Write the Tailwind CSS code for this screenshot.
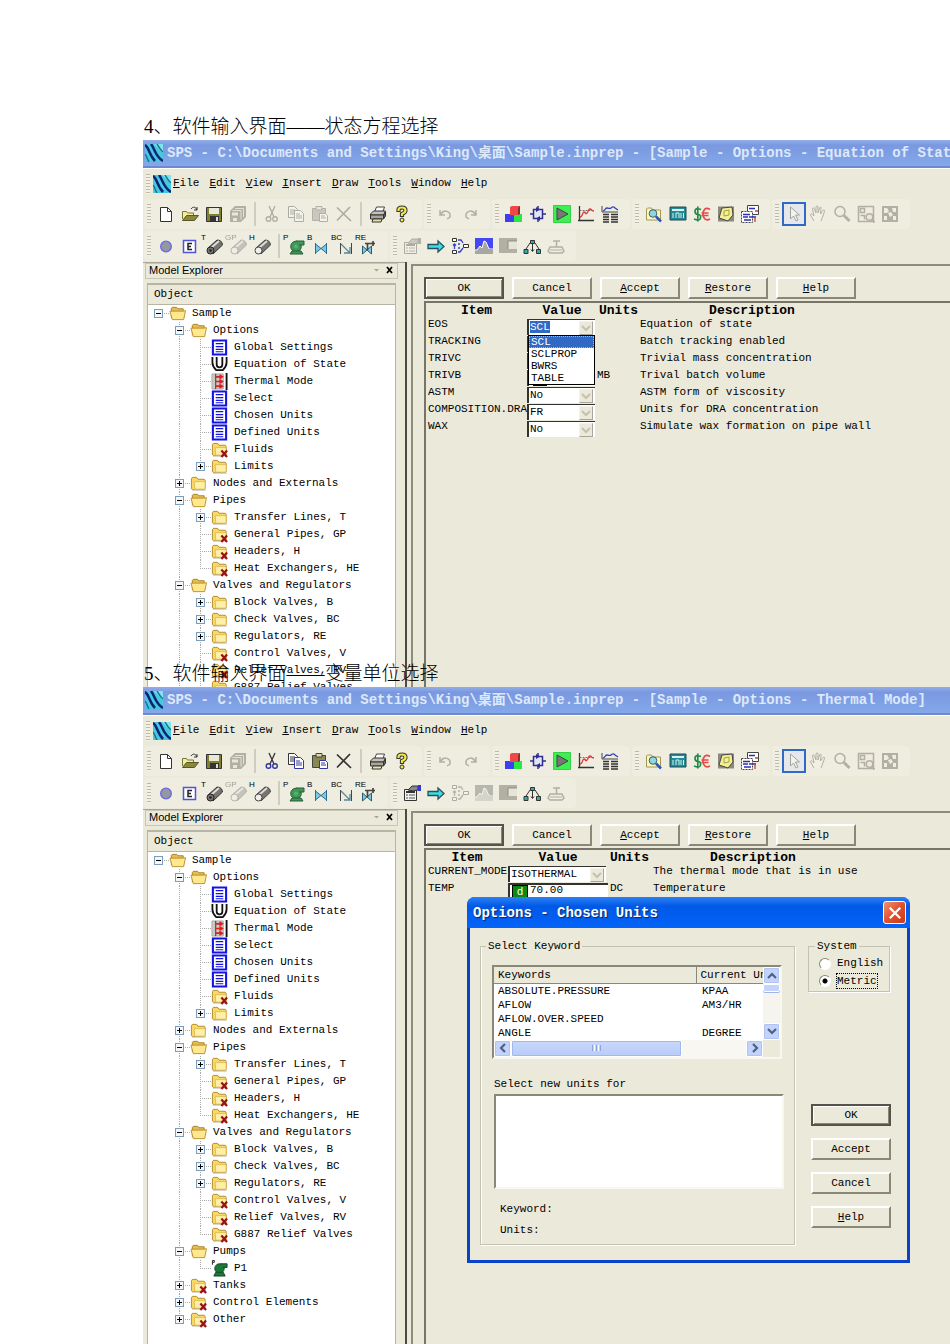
<!DOCTYPE html>
<html lang="zh-CN">
  <head>
    <meta charset="UTF-8" />
    <meta name="viewport" content="width=device-width, initial-scale=1.0" />
    <title>SPS 软件输入界面</title>
    <script src="https://cdn.jsdelivr.net/npm/@tailwindcss/browser@4"></script>
  </head>
  <body class="bg-white min-h-screen flex flex-col pt-28 overflow-x-hidden text-[11px] text-black font-['Liberation_Mono','Noto_Sans_CJK_SC',monospace]">
    <h2 class="ml-36 h-7 text-[19px] leading-[30px] font-light whitespace-nowrap font-['Liberation_Serif','Noto_Sans_CJK_SC',serif]">4、软件输入界面——状态方程选择</h2>

    <!-- Window 1: equation of state -->
    <section class="relative ml-[143px] h-[547px] flex flex-col overflow-hidden bg-[#ebe9da]">
      <div data-chrome="SPS - C:\Documents and Settings\King\桌面\Sample.inprep - [Sample - Options - Equation of State]" data-off="cut copy paste del props"></div>
      <div class="flex flex-1 min-h-0">
        <div data-explorer class="w-[262px] shrink-0"></div>
        <div class="flex-1 min-w-0 border-l-2 border-[#4c4a42] pl-1 pt-0.5">
          <div class="h-full border-l-2 border-t-2 border-[#8f8c7e] pl-[11px] pt-[11px] flex flex-col">
            <div data-buttons class="flex gap-2"></div>
            <div class="mt-0.5 flex-1 border-l-2 border-t-2 border-[#77756a]">
              <table class="table-fixed w-[438px] whitespace-nowrap">
                <colgroup><col class="w-[101px]" /><col class="w-[70px]" /><col class="w-[43px]" /><col class="w-[224px]" /></colgroup>
                <thead>
                  <tr class="h-4 text-[13px] leading-4"><th>Item</th><th>Value</th><th>Units</th><th>Description</th></tr>
                </thead>
                <tbody class="leading-[11px]">
                  <tr class="h-[17px] align-top">
                    <td class="pl-0.5"><label for="eos">EOS</label></td>
                    <td class="relative">
                      <div data-select="SCL" data-id="eos" data-hot="1"></div>
                      <ul role="listbox" class="absolute z-10 left-px top-4 w-[67px] border border-black bg-white leading-3">
                        <li role="option" aria-selected="true" class="px-0.5 bg-[#316ac5] text-white outline-1 -outline-offset-1 outline-dotted outline-[#e8b060]">SCL</li>
                        <li role="option" class="px-0.5">SCLPROP</li>
                        <li role="option" class="px-0.5">BWRS</li>
                        <li role="option" class="px-0.5">TABLE</li>
                      </ul>
                    </td>
                    <td></td>
                    <td>Equation of state</td>
                  </tr>
                  <tr class="h-[17px] align-top">
                    <td class="pl-0.5"><label for="tracking">TRACKING</label></td>
                    <td><div data-select="No" data-id="tracking"></div></td>
                    <td></td>
                    <td>Batch tracking enabled</td>
                  </tr>
                  <tr class="h-[17px] align-top">
                    <td class="pl-0.5"><label for="trivc">TRIVC</label></td>
                    <td><div data-select="No" data-id="trivc"></div></td>
                    <td></td>
                    <td>Trivial mass concentration</td>
                  </tr>
                  <tr class="h-[17px] align-top">
                    <td class="pl-0.5"><label for="trivb">TRIVB</label></td>
                    <td>
                      <div class="flex h-4 w-[68px] border-l-2 border-t-2 border-[#33322e] bg-white pl-1">
                        <span class="w-3.5 border border-black bg-[#ebe9da]"></span>
                        <input id="trivb" type="text" class="min-w-0 flex-1 outline-none" />
                      </div>
                    </td>
                    <td>MB</td>
                    <td>Trival batch volume</td>
                  </tr>
                  <tr class="h-[17px] align-top">
                    <td class="pl-0.5"><label for="astm">ASTM</label></td>
                    <td><div data-select="No" data-id="astm"></div></td>
                    <td></td>
                    <td>ASTM form of viscosity</td>
                  </tr>
                  <tr class="h-[17px] align-top">
                    <td class="pl-0.5"><label for="dra">COMPOSITION.DRA</label></td>
                    <td><div data-select="FR" data-id="dra"></div></td>
                    <td></td>
                    <td>Units for DRA concentration</td>
                  </tr>
                  <tr class="h-[17px] align-top">
                    <td class="pl-0.5"><label for="wax">WAX</label></td>
                    <td><div data-select="No" data-id="wax"></div></td>
                    <td></td>
                    <td>Simulate wax formation on pipe wall</td>
                  </tr>
                </tbody>
              </table>
            </div>
          </div>
        </div>
      </div>
      <h2 class="absolute bottom-0 left-px h-7 text-[19px] leading-[30px] font-light whitespace-nowrap font-['Liberation_Serif','Noto_Sans_CJK_SC',serif]">5、软件输入界面——变量单位选择</h2>
    </section>

    <!-- Window 2: thermal mode with the units dialog on top -->
    <section class="relative ml-[143px] flex-1 flex flex-col overflow-hidden bg-[#ebe9da]">
      <div data-chrome="SPS - C:\Documents and Settings\King\桌面\Sample.inprep - [Sample - Options - Thermal Mode]" data-off="link graph"></div>
      <div class="flex flex-1">
        <div data-explorer class="w-[262px] shrink-0"></div>
        <div class="flex-1 min-w-0 border-l-2 border-[#4c4a42] pl-1 pt-0.5 flex">
          <div class="flex-1 min-w-0 border-l-2 border-t-2 border-[#8f8c7e] pl-[11px] pt-[11px] flex flex-col">
            <div data-buttons class="flex gap-2"></div>
            <div class="mt-0.5 flex-1 border-l-2 border-t-2 border-[#77756a]">
              <table class="table-fixed w-[429px] whitespace-nowrap">
                <colgroup><col class="w-[82px]" /><col class="w-[100px]" /><col class="w-[43px]" /><col class="w-[204px]" /></colgroup>
                <thead>
                  <tr class="h-4 text-[13px] leading-4"><th>Item</th><th>Value</th><th>Units</th><th>Description</th></tr>
                </thead>
                <tbody class="leading-[11px]">
                  <tr class="h-[17px] align-top">
                    <td class="pl-0.5"><label for="mode">CURRENT_MODE</label></td>
                    <td><div data-select="ISOTHERMAL" data-id="mode"></div></td>
                    <td></td>
                    <td class="pl-0.5">The thermal mode that is in use</td>
                  </tr>
                  <tr class="h-[17px] align-top">
                    <td class="pl-0.5"><label for="temp">TEMP</label></td>
                    <td>
                      <div class="flex h-4 border-l-2 border-t-2 border-[#33322e] bg-white pl-0.5">
                        <button type="button" class="w-4 border border-black bg-[#0b8a12] text-white leading-3">d</button>
                        <input id="temp" type="text" value="70.00" class="min-w-0 flex-1 outline-none pl-0.5 pb-1" />
                      </div>
                    </td>
                    <td class="pl-0.5">DC</td>
                    <td class="pl-0.5">Temperature</td>
                  </tr>
                </tbody>
              </table>
            </div>
          </div>
        </div>
      </div>

      <div role="dialog" aria-labelledby="dlg-title" class="absolute left-[324px] top-[210px] w-[443px] rounded-t-lg bg-[#0b43c8] pb-[3px] overflow-hidden">
        <div class="flex items-center justify-between h-[31px] pl-1.5 pr-1 bg-linear-to-b from-[#2b80f5] via-[#0058e6] via-30% to-[#0464fa]">
          <h3 id="dlg-title" class="text-sm font-bold text-white [text-shadow:1px_1px_1px_#0a246a]">Options - Chosen Units</h3>
          <button type="button" aria-label="Close" class="size-[23px] rounded-[3px] border border-white bg-linear-to-br from-[#f09070] via-[#e0502c] to-[#c83a12] flex items-center justify-center">
            <svg viewBox="0 0 12 12" class="size-3.5"><path d="M1.500 1.500 10.500 10.500M10.500 1.500 1.500 10.500" stroke="#fff" stroke-width="2" /></svg>
          </button>
        </div>
        <div class="mx-[3px] flex bg-[#ebe9da] pl-2.5 pt-[11px] pb-[15px]">
          <fieldset class="w-[315px] border border-[#c4c2b2] pl-[11px] pb-[7px] shadow-[inset_1px_0_#fff,1px_1px_#fff]">
            <legend class="-ml-1.5 px-0.5 leading-[14px]">Select Keyword</legend>
            <div class="mt-3 w-[290px] border-2 border-t-[#8a8878] border-l-[#8a8878] border-r-[#f8f7f0] border-b-[#f8f7f0]">
              <div class="flex">
                <div class="flex-1 min-w-0 overflow-hidden bg-white">
                  <table class="table-fixed w-[330px] whitespace-nowrap leading-[14px]">
                    <colgroup><col class="w-[202px]" /><col class="w-32" /></colgroup>
                    <thead>
                      <tr class="h-4 bg-[#ebe9da] text-left">
                        <th class="border-b border-r border-[#8a8878] pl-1 font-normal">Keywords</th>
                        <th class="border-b border-l border-b-[#8a8878] border-l-white pl-1 font-normal">Current Units</th>
                      </tr>
                    </thead>
                    <tbody>
                      <tr class="h-3.5"><td class="pl-1">ABSOLUTE.PRESSURE</td><td class="pl-1.5">KPAA</td></tr>
                      <tr class="h-3.5"><td class="pl-1">AFLOW</td><td class="pl-1.5">AM3/HR</td></tr>
                      <tr class="h-3.5"><td class="pl-1">AFLOW.OVER.SPEED</td><td></td></tr>
                      <tr class="h-3.5"><td class="pl-1">ANGLE</td><td class="pl-1.5">DEGREE</td></tr>
                    </tbody>
                  </table>
                </div>
                <div class="w-[17px] flex flex-col bg-[#f5f4ee]">
                  <button type="button" aria-label="Scroll up" class="h-[17px] rounded-xs border border-white bg-[#c3d3fb] shadow-[inset_0_0_0_1px_#b0c4f4] flex items-center justify-center"><svg viewBox="0 0 10 10" class="size-2.5"><path d="M1 7 5 3 9 7" fill="none" stroke="#4d6185" stroke-width="2.200" /></svg></button>
                  <div class="h-2 rounded-xs border border-white bg-[#c3d3fb] shadow-[0_1px_#9fb5e8]"></div>
                  <button type="button" aria-label="Scroll down" class="mt-auto h-[17px] rounded-xs border border-white bg-[#c3d3fb] shadow-[inset_0_0_0_1px_#b0c4f4] flex items-center justify-center"><svg viewBox="0 0 10 10" class="size-2.5"><path d="M1 3 5 7 9 3" fill="none" stroke="#4d6185" stroke-width="2.200" /></svg></button>
                </div>
              </div>
              <div class="flex h-[17px] mr-[17px] bg-[#f8f7f2]">
                <button type="button" aria-label="Scroll left" class="w-[17px] rounded-xs border border-white bg-[#c3d3fb] shadow-[inset_0_0_0_1px_#b0c4f4] flex items-center justify-center"><svg viewBox="0 0 10 10" class="size-2.5"><path d="M7 1 3 5 7 9" fill="none" stroke="#4d6185" stroke-width="2.200" /></svg></button>
                <div class="w-[171px] rounded-xs border border-white bg-linear-to-b from-[#c8d8fd] to-[#b8ccf8] shadow-[inset_0_0_0_1px_#a0b8ec] flex items-center justify-center gap-px">
                  <i class="w-px h-1.5 bg-[#8ca6e2]"></i><i class="w-px h-1.5 bg-white"></i><i class="w-px h-1.5 bg-[#8ca6e2]"></i><i class="w-px h-1.5 bg-white"></i><i class="w-px h-1.5 bg-[#8ca6e2]"></i>
                </div>
                <button type="button" aria-label="Scroll right" class="ml-auto w-[17px] rounded-xs border border-white bg-[#c3d3fb] shadow-[inset_0_0_0_1px_#b0c4f4] flex items-center justify-center"><svg viewBox="0 0 10 10" class="size-2.5"><path d="M3 1 7 5 3 9" fill="none" stroke="#4d6185" stroke-width="2.200" /></svg></button>
              </div>
            </div>
            <label for="newunits" class="block mt-[18px] ml-0.5 leading-[14px]">Select new units for</label>
            <textarea id="newunits" class="block mt-[3px] ml-0.5 h-[95px] w-[290px] resize-none bg-white outline-none border-2 border-t-[#8a8878] border-l-[#8a8878] border-r-[#f8f7f0] border-b-[#f8f7f0]"></textarea>
            <p class="mt-[13px] ml-2 leading-[14px]">Keyword:</p>
            <p class="mt-[7px] ml-2 leading-[14px]">Units:</p>
          </fieldset>
          <div class="ml-[13px]">
            <fieldset class="w-[82px] border border-[#c4c2b2] pt-0.5 pb-0.5 pl-2.5 shadow-[1px_1px_#fff]">
              <legend class="-ml-1 px-0.5 leading-[14px]">System</legend>
              <label class="flex items-center h-[17px]"><input type="radio" name="sys" class="appearance-none size-3 rounded-full border border-[#8a8878] border-r-white border-b-white bg-white mr-1.5" /><span>English</span></label>
              <label class="flex items-center h-[17px]"><input type="radio" name="sys" checked class="appearance-none size-3 rounded-full border border-[#8a8878] border-r-white border-b-white bg-white bg-[radial-gradient(circle,#000_2px,#fff_3px)] mr-1.5" /><span class="leading-[14px] outline-1 outline-dotted outline-black">Metric</span></label>
            </fieldset>
            <div class="mt-28 ml-[3px] flex flex-col gap-3">
              <button type="button" class="h-[22px] w-20 border-2 border-[#55534a] shadow-[inset_1px_1px_#fff,inset_-1px_-1px_#8a8776]">OK</button>
              <button type="button" class="h-[22px] w-20 border-2 border-t-white border-l-white border-r-[#8a8776] border-b-[#8a8776]">Accept</button>
              <button type="button" class="h-[22px] w-20 border-2 border-t-white border-l-white border-r-[#8a8776] border-b-[#8a8776]">Cancel</button>
              <button type="button" class="h-[22px] w-20 border-2 border-t-white border-l-white border-r-[#8a8776] border-b-[#8a8776]"><u>H</u>elp</button>
            </div>
          </div>
        </div>
      </div>
    </section>

    <script>
      // 18x18 icon bodies
      const grey = '#b2b0a2';
      const icons = {
        app: '<rect width="18" height="18" fill="#48c8dc"/><path d="M9 0h9v9z" fill="#80e4ec"/><path d="M0 1C4 3 4 11 10 17M6 0c4 5 4 12 12 17" fill="none" stroke="#0a2478" stroke-width="2.500"/><path d="M12 0c2 3 3 6 6 8M0 10c2 2 2 5 4 8" stroke="#107890" fill="none" stroke-width="1.500"/>',
        new: '<path d="M3.500 2.500h7l4 4v10h-11z" fill="#fff" stroke="#333"/><path d="M10.500 2.500v4h4" fill="none" stroke="#333"/>',
        open: '<path d="M1.500 14V6.500h4l1 1.500h6v3" fill="#f4ee98" stroke="#77743a"/><path d="m1.500 15.500 4-5h12l-4 5z" fill="#8a883c" stroke="#5a5828"/><path d="M10 4c2-3 5-2 6 1m0-3v3h-3" fill="none" stroke="#333"/>',
        save: '<path d="M1.500 2.500h15v14h-15z" fill="#808030" stroke="#333"/><path d="M4 3h10v6H4z" fill="#e8e8dc"/><path d="M5 11h9v5H5z" fill="#333"/><path d="M11 12h2v4h-2z" fill="#ddd"/>',
        saveall: `<path d="M6 1h11v11l-5 5H1V6z" fill="${grey}"/><path d="M3.500 5.500h8.500v9M6 3.500h8.500V12" fill="none" stroke="#e4e2d4"/><path d="M3 7.500h6v3H3zM4 13h4v3H4z" fill="#e8e6d8"/>`,
        cut: '<path d="M6 1l5 11M12 1 7 12" stroke="#333" stroke-width="1.300"/><circle cx="5.500" cy="14" r="2.300" fill="none" stroke="#3038a0" stroke-width="1.400"/><circle cx="12" cy="14" r="2.300" fill="none" stroke="#3038a0" stroke-width="1.400"/>',
        copy: '<path d="M1.500 1.500h6l3 3v8h-9z" fill="#fff" stroke="#333"/><path d="M3 5h5M3 7h5M3 9h4" stroke="#333"/><path d="M7.500 5.500h6l3 3v8h-9z" fill="#fff" stroke="#3038a0"/><path d="M9 9h4M9 11h6M9 13h6" stroke="#3038a0"/>',
        paste: '<path d="M1.500 3.500h13v12h-13z" fill="#8a8850" stroke="#444"/><path d="M5 1.500h6V5H5z" fill="#ddd9a0" stroke="#444"/><path d="M8.500 8.500h6l2 2v6h-8z" fill="#fff" stroke="#3038a0"/><path d="M10 11h4M10 13h5" stroke="#3038a0"/>',
        del: '<path d="M2 2.500 16 16M15 2 2 15.500" stroke="#333" stroke-width="1.700"/>',
        print: '<path d="M5.500 7 7.500 2h8l-2 6" fill="#fff" stroke="#444"/><path d="m1.500 9 3-3h12l-2 4h-13z" fill="#c4c2ba" stroke="#333"/><path d="M1.500 10h13v4h-13z" fill="#a8a69e" stroke="#333"/><path d="m14.500 10 2-3v4l-2 3z" fill="#666" stroke="#333"/><path d="M4 14h9l-1 3H3z" fill="#e8e4a0" stroke="#333"/>',
        help: '<path d="M5.500 7V5Q5.500 2.500 9 2.500T12.500 5.500Q12.500 7.500 9 9v3" fill="none" stroke="#333" stroke-width="4.200"/><path d="M5.500 6V5Q5.500 2.500 9 2.500T12.500 5.500Q12.500 7.500 9 9v2" fill="none" stroke="#f4e840" stroke-width="2.200"/><circle cx="9" cy="15" r="2" fill="#f4e840" stroke="#333"/>',
        undo: `<path d="M4 9c3-5 10-3 9 3l-3 2M3 5v5h5" fill="none" stroke="${grey}" stroke-width="1.500"/>`,
        redo: `<path d="M14 9c-3-5-10-3-9 3l3 2M15 5v5h-5" fill="none" stroke="${grey}" stroke-width="1.500"/>`,
        blocks: '<path d="M0 9h9v8H0z" fill="#3c40f0"/><path d="M9 9h8v8H9z" fill="#28e848"/><path d="M5 2l2-1h8v8l-2 1H5z" fill="#f04848"/><path d="M13 3l2-2v8l-2 1z" fill="#902c2c"/>',
        cross: '<path d="M4.500 4.500h9v9h-9z" fill="#e4e4f4" stroke="#2c3090" stroke-width="1.500"/><path d="M1 9h4M13 9h4M9 1v3M9 14v3" stroke="#2c3090" stroke-width="1.500"/><path d="m7 2 4 2.500L7 7zM11 11l-4 2.500 4 2.500z" fill="#2c3090"/>',
        play: '<path d="M.5.5h17v17H.5z" fill="#3cf050" stroke="#38d048"/><path d="m4 3 11 6-11 6z" fill="#777" stroke="#444"/>',
        plot: '<path d="M2.500 1v15M1 15.500h16" stroke="#333" stroke-width="1.300"/><path d="M2.500 5.500h14" stroke="#777" stroke-dasharray="2 1"/><path d="M3 12c3 0 2-5 4-5s1 3 3 1 1-4 3-4 1 2 4 2" fill="none" stroke="#e03838" stroke-width="1.300"/>',
        trend: '<path d="M1 1v6h16" fill="none" stroke="#444"/><path d="M2 6c3-1 2-3 4-3s3 1 4 0 3-2 4 0l3 2" fill="none" stroke="#2c40c8" stroke-width="1.300"/><path d="M2 9.500h6M10 9.500h7M2 12h6M10 12h7M2 14.500h6M10 14.500h7M2 17h6M10 17h7" stroke="#333" stroke-width="1.400"/>',
        find: '<path d="M1.500 15V4l1-1h4l1 2h8V15z" fill="#faf6c0" stroke="#a09850"/><circle cx="8" cy="8.500" r="3.800" fill="#8cd8e0" stroke="#48586c"/><path d="m11 11.500 5 5" stroke="#2458c0" stroke-width="2.500"/>',
        calc: '<path d="M1 2h16v13H1z" fill="#208c98" stroke="#24484c"/><path d="M3 4h12v2H3z" fill="#d8f0f0"/><path d="M4 8v5M7 13V8h3v5M12 8v5M14.500 8v5" stroke="#d8f0f0" fill="none"/>',
        money: '<path d="M8 4.500Q2 2.500 2 6t3 3.500T7.500 13 1 14M4.800 1.500v15" fill="none" stroke="#208c48" stroke-width="1.700"/><path d="M17 4.500c-5-3-7 1-7 4.500s2 7.500 7 5M8.500 8h7M8.500 10.500h7" fill="none" stroke="#e84848" stroke-width="1.700"/>',
        note: '<path d="M1 1.500h16v15H1z" fill="#8c8a80"/><path d="m5 3 10-1 1 8-5 6-9-3z" fill="#f4f090" stroke="#444"/><path d="m7 6 5-1v5l-5 1z" fill="none" stroke="#a0a050"/>',
        report: '<path d="M6.500.5h11v9h-11z" fill="#fff" stroke="#444"/><path d="M.5 6.500h11v11H.5z" fill="#fff" stroke="#444" stroke-dasharray="2 1"/><path d="M8 3.500h6M2 9.500h7M2 12h5M8 12h7M3 15h7" stroke="#2c30b0" stroke-width="1.300"/><path d="M14 6h3M14 12v5" stroke="#c04040" stroke-width="1.300"/>',
        arrow: '<path d="M5.500 2v12l3-3 2.500 5 2-1-2.500-5h4z" fill="#f2f2ee" stroke="#a4a498"/>',
        hand: `<path d="M5 16 1.500 10c-.5-1 1-2 2-.5L5 11 3.500 4c0-1.500 1.500-1.500 2 0L7 8V2c0-1.500 2-1.500 2 0v6l1.500-5c.5-1.500 2-1 1.500.5L11.500 9 14 5.500c1-1 2 0 1.500 1L13.500 12l-1.500 4" fill="#f2f0e4" stroke="${grey}"/>`,
        zoom: `<circle cx="7" cy="6.500" r="5" fill="none" stroke="${grey}" stroke-width="1.500"/><path d="m11 10.500 5.500 5.500" stroke="${grey}" stroke-width="3"/>`,
        fitsel: `<path d="M1.500 1.500h15v15h-15zM3.500 3.500h4v4h-4zM3.500 10.500h4v4" fill="none" stroke="${grey}" stroke-width="1.500"/><circle cx="12.500" cy="12" r="3.300" fill="#ebe9da" stroke="${grey}" stroke-width="1.500"/><path d="m14.500 14.500 3 3" stroke="${grey}" stroke-width="2"/>`,
        fitall: `<path d="M1 1h16v16H1z" fill="${grey}"/><path d="M3 3h3l2 3-2 2H3zM11 3h4v4h-3zM3 11h3v4H3zM12 11h3v4h-3zM7 8l3-1 2 3-3 2z" fill="#efeddf"/>`,
        node: '<circle cx="9" cy="9.500" r="5.300" fill="#9896a0" stroke="#6468e8" stroke-width="1.300"/>',
        ebox: '<path d="M2.500 3.500h12v12h-12z" fill="#fff" stroke="#5054d8" stroke-width="1.500"/><path d="M11 6.500H7v6h4M7 9.500h3" fill="none" stroke="#222" stroke-width="1.500"/>',
        pipe: '<path d="m3 11 9-8q5 0 5.500 5L8 17z" fill="#77756e" stroke="#333"/><path d="m6 11 8-7" stroke="#ddd" stroke-width="1.700"/><circle cx="5.500" cy="13.500" r="3.500" fill="#777" stroke="#222"/><circle cx="5.500" cy="13.500" r="1.300" fill="#222"/>',
        capsule: '<path d="m3 11 9-8q5 0 5.500 5L8 17z" fill="#77756e" stroke="#444"/><path d="m6 11 8-7" stroke="#ddd" stroke-width="1.700"/><circle cx="5.500" cy="13.500" r="3.500" fill="#f0f0ec" stroke="#444"/>',
        pump: '<circle cx="9" cy="9.500" r="5.300" fill="#409858" stroke="#285c38"/><path d="M9 4h8v4h-5M5 14h9l2 3H3z" fill="#409858" stroke="#285c38"/><circle cx="9" cy="9.500" r="2" fill="#58b070"/>',
        valve: '<path d="M4.500 6v11M15.500 6v11" stroke="#2c6c90"/><path d="m4.500 7 11 9V7l-11 9z" fill="#78c8e8" stroke="#2c6c90"/>',
        check: '<path d="M5.500 6v11M16.500 6v11" stroke="#444"/><path d="m6 7 9 9m0-6v6H9" fill="none" stroke="#58889c" stroke-width="1.300"/>',
        reg: '<path d="m3.500 9 9 8V9l-9 8z" fill="#78c8e8" stroke="#2c5c70"/><path d="M8.500 13V7M6 6.500h10M14 4v5" fill="none" stroke="#444" stroke-width="1.700"/>',
        props: '<path d="M1.500 5.500h12v11h-12z" fill="#f0f0ec" stroke="#333"/><path d="M3 8h9" stroke="#333" stroke-width="2"/><path d="M3 11h2M6 11h6M3 14h2M6 14h6" stroke="#555"/><path d="m5 6 4-4h6v4l-5 1z" fill="#888" stroke="#333"/><path d="M15 1h3v6h-3z" fill="#3438d0"/>',
        go: '<path d="M1 7.500h10V4l6 5.500-6 5.500v-3.500H1z" fill="#38e0e8" stroke="#28505c" stroke-width="1.300"/>',
        link: '<path d="M1.500 1.500h4v3h-4zM12.500 7.500h5v3h-5zM1.500 13.500h4v3h-4z" fill="#fff" stroke="#333"/><path d="M7 3h3l2 3M3.500 12V7M2 8.500 3.500 7 5 8.500M7 15h2l3-4M9 7h-2M9 11H7" fill="none" stroke="#3440c8" stroke-width="1.300"/>',
        graph: '<path d="M0 1h18v15H0z" fill="#4448f4"/><path d="M0 13h2l3-4 2 2 2-7 2 1 3 8h4v4H0z" fill="#a8a6a0"/><path d="M0 13h2l3-4 2 2 2-7 2 1 3 7h4" fill="none" stroke="#fff"/>',
        steps: `<path d="M0 1h18v3H9v8h9v4H0z" fill="${grey}"/><path d="M9 12V4h9" fill="none" stroke="#8c8a7c"/><path d="M10 5h8v7h-8z" fill="#e6e4d6"/>`,
        net: '<path d="M7.500 3.500h4v3h-4zM1 12.500h4v4H1zM13.500 12.500h4v4h-4z" fill="#38a8a8" stroke="#333"/><path d="M7 6 3 12M12 6l4 6M9.500 7v7M8 12.500l1.500 2 1.500-2" fill="none" stroke="#333"/>',
        scale: `<path d="M6 4h7M9.500 4v6" stroke="${grey}" stroke-width="1.500"/><path d="M3 10h12l2 4-2 2H3l-2-2z" fill="none" stroke="${grey}" stroke-width="1.500"/><path d="M3 13h12" stroke="${grey}"/>`,
        folder: '<path d="M1.500 14.500V4l1-1.500H7L8.500 4.500H15l1 1v9l-1 1h-12z" fill="#f8d868" stroke="#b08a28"/><path d="M4.500 7h11.500v8H5z" fill="#fff0a8" stroke="#d8ac40" stroke-width=".7"/><path d="M2 16h15" stroke="#c8c4b0"/>',
        openf: '<path d="M2.500 14V3.500l1-1H8L9.500 4H15v3" fill="#e8bc50" stroke="#a88020"/><path d="M1 6.500h13.500L17.500 6 15.500 15.500H3.500z" fill="#ffe890" stroke="#b89030"/>',
        doc: '<path d="M2 1.500h14v15H2z" fill="#fff" stroke="#1414e0" stroke-width="2.200"/><path d="M5 5h8M5 8h8M5 11h8M5 13.500h8" stroke="#1414e0" stroke-width="1.300"/>',
        eos: '<path d="M1.500 1v6q0 4 4 8h7q4-4 4-8V1M6 1v8q0 3 3 3t3-3V1" fill="none" stroke="#111" stroke-width="1.900"/>',
        thermal: '<path d="M1 1h12v16H1z" fill="#ccc8c4" stroke="#aaa"/><path d="M16.500 0v18" stroke="#111" stroke-width="2"/><path d="M5 1v16" stroke="#333"/><path d="M5 4h7M5 9h7M5 14h7M9 2l3 2-3 2M9 7l3 2-3 2M9 12l3 2-3 2" fill="none" stroke="#e02020" stroke-width="1.800"/>',
        treepump: '<circle cx="9" cy="9" r="5" fill="#1c7838" stroke="#124820"/><path d="M10 4h7v4h-4M5 13h8l2 4H3z" fill="#1c7838" stroke="#124820"/><path d="M1.500 5V.5h2v2h-2" fill="none" stroke="#222"/>'
      };
      icons.folderx = icons.folder + '<path d="m11 10 6 7M17 10l-6 7" stroke="#98101c" stroke-width="2.300"/>';

      const svg = (name, cls) => `<svg viewBox="0 0 18 18" class="${cls || 'size-[18px] shrink-0'}">${icons[name]}</svg>`;
      const grip = '<span class="w-2.5 shrink-0 flex justify-center"><i class="w-1 h-5 bg-[repeating-linear-gradient(#bdbaa8_0_1px,#f4f2e8_1px_3px)]"></i></span>';

      // name:label puts a small caption over the icon, "|" is a separator
      const bars = [
        ['new open save saveall | cut copy paste del | print help', 'undo redo', 'blocks cross play plot trend', 'find calc money note report', 'arrow hand zoom fitsel fitall'],
        ['node ebox pipe:T capsule:GP capsule:H | pump:P valve:B check:BC reg:RE', 'props go link graph steps net scale']
      ];

      function tool(item, off) {
        if (item === '|') return '<i class="w-2.5 shrink-0 flex justify-center"><b class="w-0.5 h-6 bg-[#d0cdbd]"></b></i>';
        const [name, cap] = item.split(':');
        const dim = off.includes(name) || cap === 'GP';
        const state = dim ? 'grayscale opacity-35' : '';
        const box = name === 'arrow' ? 'border-2 border-[#316ac5] bg-[#e4e8ec]' : '';
        const label = cap ? `<small class="absolute -left-px top-0 text-[8px] leading-[8px] font-['Liberation_Sans',sans-serif]">${cap}</small>` : '';
        return `<button type="button" aria-label="${name}" class="relative size-6 shrink-0 flex items-center justify-center ${box} ${state}">${svg(name)}${label}</button>`;
      }

      document.querySelectorAll('[data-chrome]').forEach(el => {
        const off = el.dataset.off.split(' ');
        const menus = ['File', 'Edit', 'View', 'Insert', 'Draw', 'Tools', 'Window', 'Help'];
        el.innerHTML = `
          <div class="flex items-center h-7 pl-0.5 gap-1 bg-linear-to-b from-[#92aee8] via-[#7a98e0] via-20% to-[#84a8ea] border-b-2 border-[#7088cc]">
            ${svg('app')}<h1 class="text-sm font-bold text-[#dde8fb] whitespace-nowrap">${el.dataset.chrome}</h1>
          </div>
          <nav class="flex items-center h-[30px] border-t border-white">
            ${grip}${svg('app')}
            <div class="flex gap-2.5 ml-0.5">${menus.map(m => `<button type="button"><u>${m[0]}</u>${m.slice(1)}</button>`).join('')}</div>
          </nav>
          ${bars.map(row => `<div class="flex gap-0.5 h-8 items-center pl-px">${row.map(g =>
            `<div class="flex items-center h-[30px] pr-2 rounded-sm bg-[#efeddf]">${grip}${g.split(' ').map(i => tool(i, off)).join('')}</div>`).join('')}</div>`).join('')}`;
      });

      // level, expander, icon, label, last child
      const tree = [
        [0, '-', 'openf', 'Sample', 1], [1, '-', 'openf', 'Options'],
        [2, '', 'doc', 'Global Settings'], [2, '', 'eos', 'Equation of State'], [2, '', 'thermal', 'Thermal Mode'],
        [2, '', 'doc', 'Select'], [2, '', 'doc', 'Chosen Units'], [2, '', 'doc', 'Defined Units'],
        [2, '', 'folderx', 'Fluids'], [2, '+', 'folder', 'Limits', 1],
        [1, '+', 'folder', 'Nodes and Externals'], [1, '-', 'openf', 'Pipes'],
        [2, '+', 'folder', 'Transfer Lines, T'], [2, '', 'folderx', 'General Pipes, GP'], [2, '', 'folderx', 'Headers, H'], [2, '', 'folderx', 'Heat Exchangers, HE', 1],
        [1, '-', 'openf', 'Valves and Regulators'],
        [2, '+', 'folder', 'Block Valves, B'], [2, '+', 'folder', 'Check Valves, BC'], [2, '+', 'folder', 'Regulators, RE'],
        [2, '', 'folderx', 'Control Valves, V'], [2, '', 'folderx', 'Relief Valves, RV'], [2, '', 'folderx', 'G887 Relief Valves', 1],
        [1, '-', 'openf', 'Pumps'], [2, '', 'treepump', 'P1', 1],
        [1, '+', 'folderx', 'Tanks'], [1, '+', 'folderx', 'Control Elements'], [1, '+', 'folderx', 'Other', 1]
      ];

      function branch(level, exp, last) {
        const down = level ? `<path d="M10.500 0V${last ? 9 : 17}" stroke="#aaa" stroke-dasharray="1 1"/>` : '';
        const box = exp ? `<rect x="6.500" y="4.500" width="8" height="8" fill="#f4f6f8" stroke="#7c9cbc"/><path d="M8 8.500h5${exp === '+' ? 'M10.500 6v5' : ''}" stroke="#000"/>` : '';
        return `<svg viewBox="0 0 21 17" class="w-[21px] h-[17px] shrink-0">${down}<path d="M10 8.500h11" stroke="#aaa" stroke-dasharray="1 1"/>${box}</svg>`;
      }

      const rail = '<svg viewBox="0 0 21 17" class="w-[21px] h-[17px] shrink-0"><path d="M10.500 0v17" stroke="#aaa" stroke-dasharray="1 1"/></svg>';
      const blank = '<span class="w-[21px] shrink-0"></span>';

      document.querySelectorAll('[data-explorer]').forEach(el => {
        el.innerHTML = `
          <div class="flex flex-col h-full pl-0.5 pr-[7px] border-t border-[#a8a698]">
            <div class="flex items-center h-4 pl-[3px] pr-px pb-0.5 border border-[#c8c5b4] font-['Liberation_Sans',sans-serif]">
              <span class="flex-1">Model Explorer</span>
              <svg viewBox="0 0 24 8" class="w-6 h-2"><path d="M2 3h5l-2.500 2.500z" fill="#a8a698"/><path d="m15 1 5 6M20 1l-5 6" stroke="#000" stroke-width="1.700"/></svg>
            </div>
            <div class="flex flex-col flex-1 mt-1 mx-0.5 border-x border-t-2 border-[#b8b5a4]">
              <div class="flex items-center h-5 pl-1.5 border-b border-[#b8b5a4]">Object</div>
              <ul role="tree" class="flex-1 bg-white">
                ${tree.map(([lv, exp, icon, label, last]) => `<li role="treeitem" class="flex items-center h-[17px] whitespace-nowrap">${lv > 0 ? blank : ''}${lv > 1 ? rail : ''}${branch(lv, exp, last)}${svg(icon, 'size-[17px] shrink-0')}<span class="ml-1.5">${label}</span></li>`).join('')}
              </ul>
            </div>
          </div>`;
      });

      document.querySelectorAll('[data-buttons]').forEach(el => {
        el.innerHTML = ['OK', 'Cancel', '<u>A</u>ccept', '<u>R</u>estore', '<u>H</u>elp'].map((t, i) =>
          `<button type="button" class="h-[22px] w-20 shrink-0 ${i ? 'border-2 border-t-white border-l-white border-r-[#8a8776] border-b-[#8a8776]' : 'border-2 border-[#55534a] shadow-[inset_1px_1px_#fff,inset_-1px_-1px_#8a8776]'}">${t}</button>`).join('');
      });

      document.querySelectorAll('[data-select]').forEach(el => {
        const d = el.dataset;
        el.className = 'relative flex h-4 mr-0.5 border-l-2 border-t border-[#33322e] bg-white';
        el.innerHTML = `
          <select id="${d.id}" class="appearance-none w-full h-[15px] leading-[13px] px-px outline-none ${d.hot ? 'text-transparent' : ''}"><option>${d.select}</option></select>
          ${d.hot ? `<mark class="absolute left-px top-px h-3 leading-3 bg-[#316ac5] text-white">${d.select}</mark>` : ''}
          <span class="absolute right-0.5 top-px size-3.5 border border-t-[#f4f2e8] border-l-[#f4f2e8] border-r-[#a8a698] border-b-[#a8a698] bg-[#ebe9da] flex items-center justify-center pointer-events-none">
            <svg viewBox="0 0 10 10" class="size-2.5"><path d="M1 3 5 7 9 3" fill="none" stroke="#c4c1b0" stroke-width="2"/></svg>
          </span>`;
      });
    </script>
  </body>
</html>
